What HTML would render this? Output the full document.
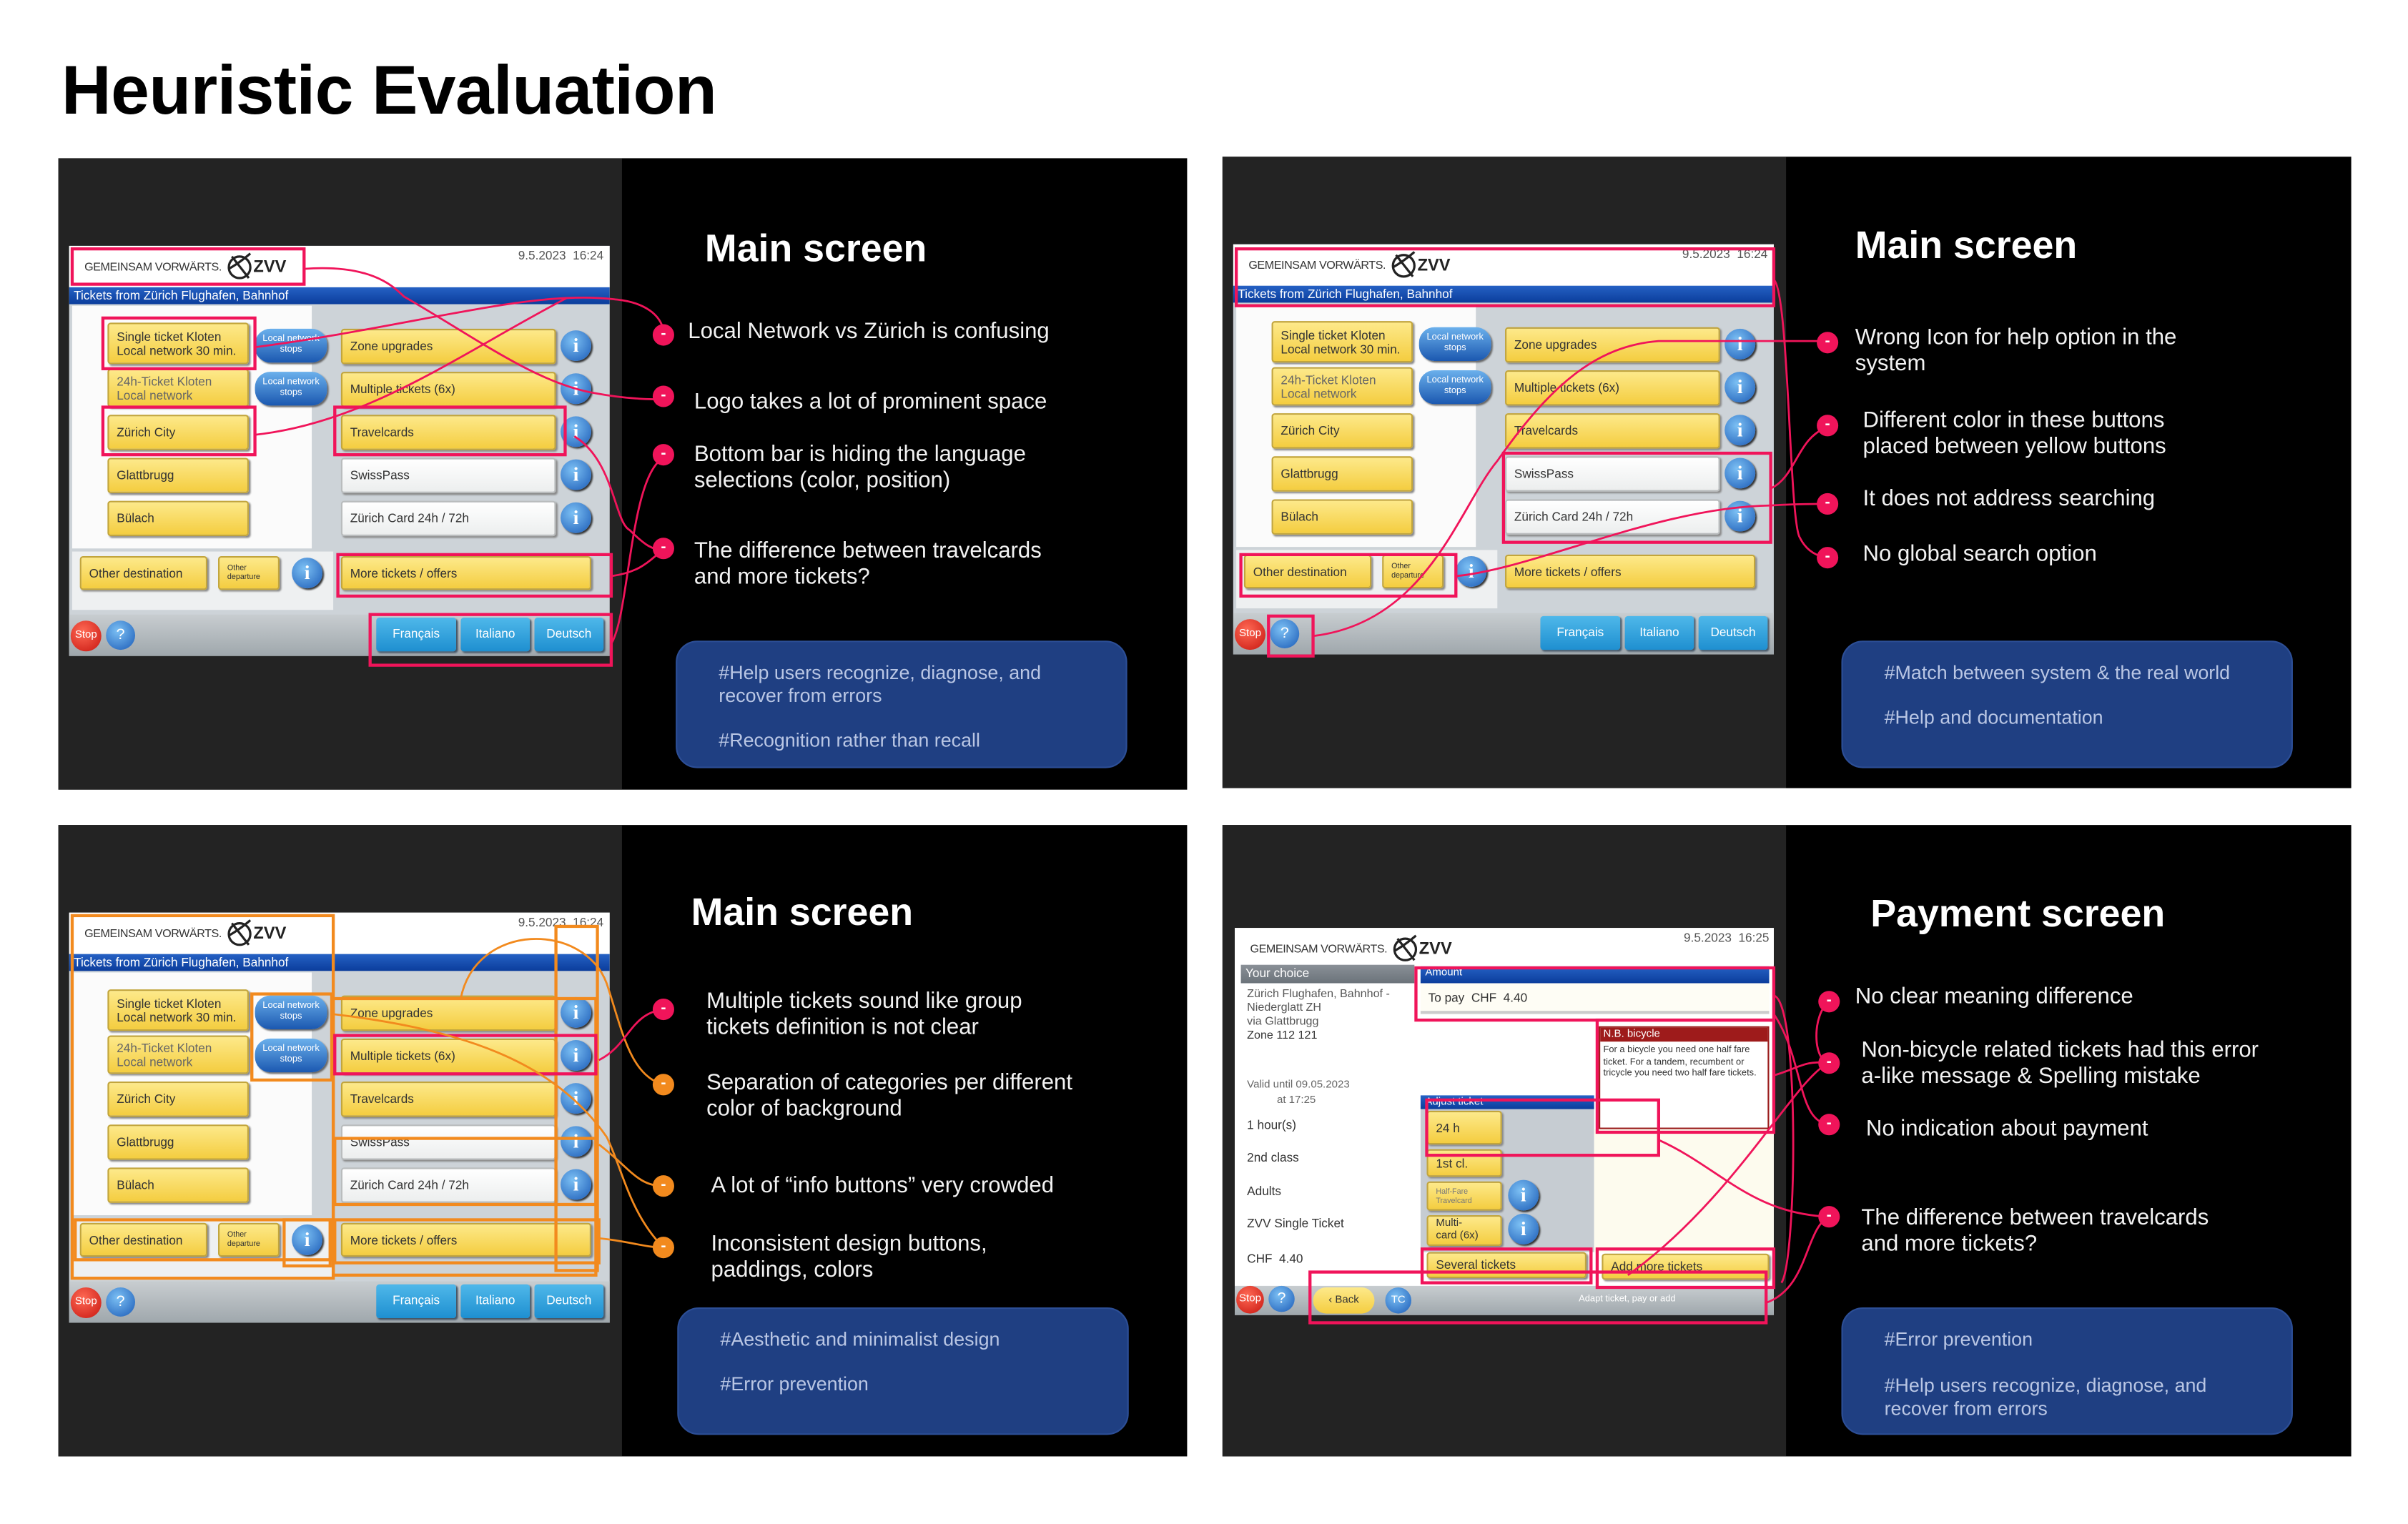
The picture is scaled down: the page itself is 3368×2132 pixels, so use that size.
<!DOCTYPE html>
<html><head><meta charset="utf-8"><style>
html,body{margin:0;padding:0;background:#fff;width:3368px;height:2132px;overflow:hidden}
#w{position:absolute;left:0;top:0;width:1568px;height:992px;transform:scale(2.148,2.1492);transform-origin:0 0;font-family:"Liberation Sans",sans-serif}
.ab{position:absolute}
h1{position:absolute;left:40px;top:36px;margin:0;font-size:45px;line-height:45px;font-weight:bold;color:#000;letter-spacing:-0.3px}
.pan{position:absolute;width:735px;height:411px;background:#000;overflow:hidden}
.pan .lf{position:absolute;left:0;top:0;width:367px;height:411px;background:#232323}
.pt{position:absolute;color:#fff;font-weight:bold;font-size:25px;line-height:28px;white-space:nowrap}
.tx{position:absolute;color:#f2f2f2;font-size:14.5px;line-height:17px;white-space:nowrap}
.bx{position:absolute;width:294px;height:83px;background:#1f3f82;border-radius:14px;border:1px solid #2c4e96;box-sizing:border-box}
.bx div{position:absolute;left:27px;color:#b9c6e4;font-size:12.5px;line-height:15px;white-space:nowrap}
/* kiosk */
.scr{position:absolute;width:352px;height:267px;background:#cdd3d8;overflow:hidden;font-family:"Liberation Sans Narrow","Liberation Sans",sans-serif;font-size:8px;color:#333}
.scr .hd{position:absolute;left:0;top:0;width:352px;height:27px;background:#fff}
.gv{position:absolute;left:10px;top:9px;font-size:7.5px;color:#333;letter-spacing:-0.2px}
.zl{position:absolute;left:102px;top:3px;font-size:11px;color:#222;font-weight:bold}
.zl span{position:absolute;left:18px;top:5px}
.dt{position:absolute;right:4px;top:2px;font-size:8px;color:#555}
.bb{position:absolute;left:0;top:27px;width:352px;height:11px;background:linear-gradient(#2561c4,#0b3d9c);color:#fff;font-size:8px;line-height:11px;padding-left:3px;box-sizing:border-box}
.lp{position:absolute;left:2px;top:39px;width:156px;height:158px;background:#fbfbfb}
.lb{position:absolute;left:2px;top:199px;width:170px;height:38px;background:#eef0f1}
.y{position:absolute;background:linear-gradient(#fde98a,#f4cd40);border:1px solid #c2a53c;border-radius:2px;box-shadow:1px 1px 1px #8a8a8a;box-sizing:border-box;padding-left:5px;display:flex;align-items:center;font-size:8px;line-height:9px;color:#333}
.wh{background:linear-gradient(#fff,#eceeee);border-color:#b9bcbd}
.pl{position:absolute;width:47px;height:22px;border-radius:10px;background:linear-gradient(#6bb0ec,#1b58b0);color:#fff;font-size:6px;line-height:7px;text-align:center;box-sizing:border-box;padding-top:4px;box-shadow:1px 1px 1px #666}
.i{position:absolute;width:20px;height:20px;border-radius:50%;background:radial-gradient(circle at 40% 35%,#7cc0f4,#1a5ab6);color:#fff;font:bold 13px/20px "Liberation Serif",serif;text-align:center;box-shadow:1px 1px 1px #333}
.bar{position:absolute;left:0;top:240px;width:352px;height:27px;background:linear-gradient(#c8cdd0,#9fa7ac)}
.st{position:absolute;width:20px;height:20px;border-radius:50%;background:radial-gradient(circle at 40% 35%,#ff6a55,#c7150f);color:#fff;font-size:7px;line-height:20px;text-align:center}
.q{position:absolute;width:19px;height:19px;border-radius:50%;background:radial-gradient(circle at 40% 35%,#7cc0f4,#1a5ab6);color:#fff;font-size:10px;line-height:19px;text-align:center}
.lg{position:absolute;top:242px;height:22px;background:linear-gradient(#4fb8ea,#1e8fd0);color:#fff;font-size:8px;line-height:22px;text-align:center;border-radius:2px;box-shadow:1px 1px 1px #456}
svg.ov{position:absolute;left:0;top:0;width:1568px;height:992px;overflow:visible}
.dot{position:absolute;width:14px;height:14px;border-radius:50%;background:#f0145a;color:#fff;font-size:10px;line-height:13px;text-align:center;font-weight:bold}
.or{background:#f28a1e}
</style></head><body><div id="w">
<h1>Heuristic Evaluation</h1>

<!-- PANEL 1 -->
<div class="pan" style="left:38px;top:103px"><div class="lf"></div>
<div class="pt" style="left:421px;top:45px">Main screen</div>
<div class="tx" style="left:410px;top:105px">Local Network vs Zürich is confusing</div>
<div class="tx" style="left:414px;top:151px">Logo takes a lot of prominent space</div>
<div class="tx" style="left:414px;top:185px">Bottom bar is hiding the language<br>selections (color, position)</div>
<div class="tx" style="left:414px;top:248px">The difference between travelcards<br>and more tickets?</div>
<div class="bx" style="left:402px;top:314px"><div style="top:13px">#Help users recognize, diagnose, and<br>recover from errors</div><div style="top:57px">#Recognition rather than recall</div></div>
</div>

<!-- PANEL 2 -->
<div class="pan" style="left:796px;top:102px"><div class="lf"></div>
<div class="pt" style="left:412px;top:44px">Main screen</div>
<div class="tx" style="left:412px;top:110px">Wrong Icon for help option in the<br>system</div>
<div class="tx" style="left:417px;top:164px">Different color in these buttons<br>placed between yellow buttons</div>
<div class="tx" style="left:417px;top:215px">It does not address searching</div>
<div class="tx" style="left:417px;top:251px">No global search option</div>
<div class="bx" style="left:403px;top:315px"><div style="top:13px">#Match between system &amp; the real world</div><div style="top:42px">#Help and documentation</div></div>
</div>

<!-- PANEL 3 -->
<div class="pan" style="left:38px;top:537px"><div class="lf"></div>
<div class="pt" style="left:412px;top:43px">Main screen</div>
<div class="tx" style="left:422px;top:107px">Multiple tickets sound like group<br>tickets definition is not clear</div>
<div class="tx" style="left:422px;top:160px">Separation of categories per different<br>color of background</div>
<div class="tx" style="left:425px;top:227px">A lot of “info buttons” very crowded</div>
<div class="tx" style="left:425px;top:265px">Inconsistent design buttons,<br>paddings, colors</div>
<div class="bx" style="left:403px;top:314px"><div style="top:13px">#Aesthetic and minimalist design</div><div style="top:42px">#Error prevention</div></div>
</div>

<!-- PANEL 4 -->
<div class="pan" style="left:796px;top:537px"><div class="lf"></div>
<div class="pt" style="left:422px;top:44px">Payment screen</div>
<div class="tx" style="left:412px;top:104px">No clear meaning difference</div>
<div class="tx" style="left:416px;top:139px">Non-bicycle related tickets had this error<br>a-like message &amp; Spelling mistake</div>
<div class="tx" style="left:419px;top:190px">No indication about payment</div>
<div class="tx" style="left:416px;top:248px">The difference between travelcards<br>and more tickets?</div>
<div class="bx" style="left:403px;top:314px"><div style="top:13px">#Error prevention</div><div style="top:43px">#Help users recognize, diagnose, and<br>recover from errors</div></div>
</div>

<!-- SCREEN 1 -->
<div class="scr" style="left:45px;top:160px">
<div class="hd"><span class="gv">GEMEINSAM VORWÄRTS.</span><span class="zl"><svg width="20" height="22" viewBox="0 0 20 22"><circle cx="9" cy="11" r="7" fill="none" stroke="#222" stroke-width="1.5"/><path d="M4 4 L15 18 M2 12 Q9 8 16 2" stroke="#222" stroke-width="1.5" fill="none"/></svg><span>ZVV</span></span><span class="dt">9.5.2023&nbsp; 16:24</span></div>
<div class="bb">Tickets from Zürich Flughafen, Bahnhof</div>
<div class="lp"></div><div class="lb"></div>
<div class="y" style="left:25px;top:50px;width:92px;height:27px">Single ticket Kloten<br>Local network 30 min.</div>
<div class="y" style="left:25px;top:80px;width:92px;height:25px;color:#666">24h-Ticket Kloten<br>Local network</div>
<div class="y" style="left:25px;top:110px;width:92px;height:23px">Zürich City</div>
<div class="y" style="left:25px;top:138px;width:92px;height:23px">Glattbrugg</div>
<div class="y" style="left:25px;top:166px;width:92px;height:23px">Bülach</div>
<div class="pl" style="left:121px;top:54px">Local network<br>stops</div>
<div class="pl" style="left:121px;top:82px">Local network<br>stops</div>
<div class="y" style="left:177px;top:54px;width:140px;height:23px">Zone upgrades</div>
<div class="y" style="left:177px;top:82px;width:140px;height:23px">Multiple tickets (6x)</div>
<div class="y" style="left:177px;top:110px;width:140px;height:23px">Travelcards</div>
<div class="y wh" style="left:177px;top:138px;width:140px;height:23px">SwissPass</div>
<div class="y wh" style="left:177px;top:166px;width:140px;height:23px">Zürich Card 24h / 72h</div>
<div class="i" style="left:320px;top:55px">i</div><div class="i" style="left:320px;top:83px">i</div><div class="i" style="left:320px;top:111px">i</div><div class="i" style="left:320px;top:139px">i</div><div class="i" style="left:320px;top:167px">i</div>
<div class="y" style="left:7px;top:202px;width:83px;height:22px">Other destination</div>
<div class="y" style="left:97px;top:202px;width:40px;height:22px;font-size:5px;line-height:6px">Other<br>departure</div>
<div class="i" style="left:145px;top:203px">i</div>
<div class="y" style="left:177px;top:202px;width:163px;height:22px">More tickets / offers</div>
<div class="bar"></div><div class="st" style="left:1px;top:244px">Stop</div><div class="q" style="left:24px;top:244px">?</div>
<div class="lg" style="left:200px;width:52px">Français</div><div class="lg" style="left:255px;width:45px">Italiano</div><div class="lg" style="left:303px;width:45px">Deutsch</div>
</div>

<!-- SCREEN 2 -->
<div class="scr" style="left:803px;top:159px">
<div class="hd"><span class="gv">GEMEINSAM VORWÄRTS.</span><span class="zl"><svg width="20" height="22" viewBox="0 0 20 22"><circle cx="9" cy="11" r="7" fill="none" stroke="#222" stroke-width="1.5"/><path d="M4 4 L15 18 M2 12 Q9 8 16 2" stroke="#222" stroke-width="1.5" fill="none"/></svg><span>ZVV</span></span><span class="dt">9.5.2023&nbsp; 16:24</span></div>
<div class="bb">Tickets from Zürich Flughafen, Bahnhof</div>
<div class="lp"></div><div class="lb"></div>
<div class="y" style="left:25px;top:50px;width:92px;height:27px">Single ticket Kloten<br>Local network 30 min.</div>
<div class="y" style="left:25px;top:80px;width:92px;height:25px;color:#666">24h-Ticket Kloten<br>Local network</div>
<div class="y" style="left:25px;top:110px;width:92px;height:23px">Zürich City</div>
<div class="y" style="left:25px;top:138px;width:92px;height:23px">Glattbrugg</div>
<div class="y" style="left:25px;top:166px;width:92px;height:23px">Bülach</div>
<div class="pl" style="left:121px;top:54px">Local network<br>stops</div>
<div class="pl" style="left:121px;top:82px">Local network<br>stops</div>
<div class="y" style="left:177px;top:54px;width:140px;height:23px">Zone upgrades</div>
<div class="y" style="left:177px;top:82px;width:140px;height:23px">Multiple tickets (6x)</div>
<div class="y" style="left:177px;top:110px;width:140px;height:23px">Travelcards</div>
<div class="y wh" style="left:177px;top:138px;width:140px;height:23px">SwissPass</div>
<div class="y wh" style="left:177px;top:166px;width:140px;height:23px">Zürich Card 24h / 72h</div>
<div class="i" style="left:320px;top:55px">i</div><div class="i" style="left:320px;top:83px">i</div><div class="i" style="left:320px;top:111px">i</div><div class="i" style="left:320px;top:139px">i</div><div class="i" style="left:320px;top:167px">i</div>
<div class="y" style="left:7px;top:202px;width:83px;height:22px">Other destination</div>
<div class="y" style="left:97px;top:202px;width:40px;height:22px;font-size:5px;line-height:6px">Other<br>departure</div>
<div class="i" style="left:145px;top:203px">i</div>
<div class="y" style="left:177px;top:202px;width:163px;height:22px">More tickets / offers</div>
<div class="bar"></div><div class="st" style="left:1px;top:244px">Stop</div><div class="q" style="left:24px;top:244px">?</div>
<div class="lg" style="left:200px;width:52px">Français</div><div class="lg" style="left:255px;width:45px">Italiano</div><div class="lg" style="left:303px;width:45px">Deutsch</div>
</div>

<!-- SCREEN 3 -->
<div class="scr" style="left:45px;top:594px">
<div class="hd"><span class="gv">GEMEINSAM VORWÄRTS.</span><span class="zl"><svg width="20" height="22" viewBox="0 0 20 22"><circle cx="9" cy="11" r="7" fill="none" stroke="#222" stroke-width="1.5"/><path d="M4 4 L15 18 M2 12 Q9 8 16 2" stroke="#222" stroke-width="1.5" fill="none"/></svg><span>ZVV</span></span><span class="dt">9.5.2023&nbsp; 16:24</span></div>
<div class="bb">Tickets from Zürich Flughafen, Bahnhof</div>
<div class="lp"></div><div class="lb"></div>
<div class="y" style="left:25px;top:50px;width:92px;height:27px">Single ticket Kloten<br>Local network 30 min.</div>
<div class="y" style="left:25px;top:80px;width:92px;height:25px;color:#666">24h-Ticket Kloten<br>Local network</div>
<div class="y" style="left:25px;top:110px;width:92px;height:23px">Zürich City</div>
<div class="y" style="left:25px;top:138px;width:92px;height:23px">Glattbrugg</div>
<div class="y" style="left:25px;top:166px;width:92px;height:23px">Bülach</div>
<div class="pl" style="left:121px;top:54px">Local network<br>stops</div>
<div class="pl" style="left:121px;top:82px">Local network<br>stops</div>
<div class="y" style="left:177px;top:54px;width:140px;height:23px">Zone upgrades</div>
<div class="y" style="left:177px;top:82px;width:140px;height:23px">Multiple tickets (6x)</div>
<div class="y" style="left:177px;top:110px;width:140px;height:23px">Travelcards</div>
<div class="y wh" style="left:177px;top:138px;width:140px;height:23px">SwissPass</div>
<div class="y wh" style="left:177px;top:166px;width:140px;height:23px">Zürich Card 24h / 72h</div>
<div class="i" style="left:320px;top:55px">i</div><div class="i" style="left:320px;top:83px">i</div><div class="i" style="left:320px;top:111px">i</div><div class="i" style="left:320px;top:139px">i</div><div class="i" style="left:320px;top:167px">i</div>
<div class="y" style="left:7px;top:202px;width:83px;height:22px">Other destination</div>
<div class="y" style="left:97px;top:202px;width:40px;height:22px;font-size:5px;line-height:6px">Other<br>departure</div>
<div class="i" style="left:145px;top:203px">i</div>
<div class="y" style="left:177px;top:202px;width:163px;height:22px">More tickets / offers</div>
<div class="bar"></div><div class="st" style="left:1px;top:244px">Stop</div><div class="q" style="left:24px;top:244px">?</div>
<div class="lg" style="left:200px;width:52px">Français</div><div class="lg" style="left:255px;width:45px">Italiano</div><div class="lg" style="left:303px;width:45px">Deutsch</div>
</div>

<!-- SCREEN 4 payment -->
<div class="scr" style="left:804px;top:604px;width:351px;height:252px;background:#fff">
<div class="hd" style="height:24px"><span class="gv">GEMEINSAM VORWÄRTS.</span><span class="zl"><svg width="20" height="22" viewBox="0 0 20 22"><circle cx="9" cy="11" r="7" fill="none" stroke="#222" stroke-width="1.5"/><path d="M4 4 L15 18 M2 12 Q9 8 16 2" stroke="#222" stroke-width="1.5" fill="none"/></svg><span>ZVV</span></span><span class="dt">9.5.2023&nbsp; 16:25</span></div>
<div class="ab" style="left:4px;top:24px;width:113px;height:12px;background:linear-gradient(#8a9097,#6b737a);color:#fff;font-size:8px;line-height:12px;padding-left:3px;box-sizing:border-box">Your choice</div>
<div class="ab" style="left:8px;top:38px;font-size:7.5px;line-height:9px;color:#555">Zürich Flughafen, Bahnhof -<br>Niederglatt ZH<br>via Glattbrugg<br><span style="color:#333">Zone 112 121</span></div>
<div class="ab" style="left:8px;top:98px;font-size:7px;line-height:10px;color:#666">Valid until 09.05.2023<br>&nbsp;&nbsp;&nbsp;&nbsp;&nbsp;&nbsp;&nbsp;&nbsp;&nbsp;&nbsp;at 17:25</div>
<div class="ab" style="left:8px;top:124px;font-size:8px">1 hour(s)</div>
<div class="ab" style="left:8px;top:145px;font-size:8px">2nd class</div>
<div class="ab" style="left:8px;top:167px;font-size:8px">Adults</div>
<div class="ab" style="left:8px;top:188px;font-size:8px">ZVV Single Ticket</div>
<div class="ab" style="left:8px;top:211px;font-size:8px">CHF&nbsp; 4.40</div>
<div class="ab" style="left:121px;top:25px;width:227px;height:11px;background:linear-gradient(#2561c4,#0b3d9c);color:#fff;font-size:7px;line-height:10px;padding-left:3px;box-sizing:border-box">Amount</div>
<div class="ab" style="left:121px;top:36px;width:227px;height:20px;background:#fefdf5;border-bottom:2px solid #ccc;font-size:8px;line-height:20px;padding-left:5px;box-sizing:border-box">To pay&nbsp; CHF&nbsp; 4.40</div>
<div class="ab" style="left:237px;top:64px;width:111px;height:67px;background:#fff;border:1px solid #9a1a1a;box-sizing:border-box"><div style="background:#9e1b1b;color:#fff;font-size:7px;line-height:9px;padding-left:2px">N.B. bicycle</div><div style="font-size:6px;line-height:7.5px;padding:3px 2px;color:#333">For a bicycle you need one half fare ticket. For a tandem, recumbent or tricycle you need two half fare tickets.</div></div>
<div class="ab" style="left:121px;top:109px;width:113px;height:9px;background:linear-gradient(#2561c4,#0b3d9c);color:#fff;font-size:7px;line-height:9px;padding-left:3px;box-sizing:border-box">Adjust ticket</div>
<div class="ab" style="left:121px;top:118px;width:113px;height:93px;background:#c6ccd2"></div>
<div class="ab" style="left:234px;top:131px;width:117px;height:80px;background:#fdfbee"></div>
<div class="y" style="left:125px;top:119px;width:49px;height:22px">24 h</div>
<div class="y" style="left:125px;top:144px;width:49px;height:18px">1st cl.</div>
<div class="y" style="left:125px;top:165px;width:49px;height:19px;font-size:5px;line-height:6px;color:#777">Half-Fare<br>Travelcard</div>
<div class="y" style="left:125px;top:187px;width:49px;height:20px;font-size:7px;line-height:8px">Multi-<br>card (6x)</div>
<div class="i" style="left:178px;top:164px">i</div><div class="i" style="left:178px;top:186px">i</div>
<div class="y" style="left:125px;top:211px;width:104px;height:17px">Several tickets</div>
<div class="y" style="left:239px;top:212px;width:109px;height:17px">Add more tickets</div>
<div class="ab" style="left:0;top:233px;width:351px;height:19px;background:linear-gradient(#c8cdd0,#9fa7ac)"></div>
<div class="st" style="left:1px;top:233px;width:18px;height:18px;line-height:18px">Stop</div><div class="q" style="left:22px;top:233px;width:17px;height:17px;line-height:17px">?</div>
<div class="ab" style="left:51px;top:234px;width:40px;height:17px;border-radius:9px;background:linear-gradient(#fde98a,#f4cd40);font-size:7px;line-height:17px;text-align:center">&lsaquo; Back</div>
<div class="q" style="left:98px;top:234px;width:17px;height:17px;line-height:17px;font-size:7px">TC</div>
<div class="ab" style="left:224px;top:239px;font-size:6px;color:#fff">Adapt ticket, pay or add</div>
</div>

<svg class="ov" viewBox="0 0 1568 992" fill="none">
<g stroke="#f0145a" stroke-width="2">
<!-- P1 boxes -->
<rect x="47" y="162" width="151" height="23"/><rect x="67" y="207" width="99" height="33"/><rect x="67" y="265" width="99" height="31"/><rect x="218" y="265" width="150" height="31"/><rect x="220" y="361" width="178" height="27"/><rect x="241" y="400" width="157" height="33"/>
</g>
<g stroke="#f0145a" stroke-width="1.3">
<path d="M198,175 C240,172 255,185 263,193 C310,220 350,250 388,256 C410,260 425,260 436,260"/>
<path d="M166,226 C250,215 320,196 369,194 C390,193 400,195 402,195 C420,197 430,205 432,215"/>
<path d="M166,283 C240,275 300,230 369,194"/>
<path d="M374,284 C400,300 400,340 410,345 C420,355 425,358 432,358"/>
<path d="M398,375 C420,372 425,362 432,358"/>
<path d="M398,419 C410,400 410,310 432,298"/>
</g>
<!-- P2 -->
<g stroke="#f0145a" stroke-width="2">
<rect x="805" y="162" width="350" height="37"/><rect x="979" y="295" width="174" height="58"/><rect x="808" y="361" width="140" height="27"/><rect x="826" y="401" width="29" height="26"/>
</g>
<g stroke="#f0145a" stroke-width="1.3">
<path d="M1155,182 C1165,190 1165,340 1172,350 C1176,358 1182,362 1190,363"/>
<path d="M855,414 C930,405 950,330 975,300 C1010,250 1040,225 1080,222 L1190,222"/>
<path d="M1153,318 C1170,310 1170,285 1190,278"/>
<path d="M1153,329 C1170,328 1180,328 1190,328"/>
<path d="M948,375 C1000,370 1080,330 1153,329"/>
</g>
<!-- P3 -->
<g stroke="#f28a1e" stroke-width="2">
<rect x="47" y="596" width="170" height="236"/><rect x="49" y="794" width="166" height="26"/><rect x="164" y="647" width="52" height="56"/><rect x="217" y="650" width="171" height="180"/><rect x="362" y="603" width="27" height="224"/><rect x="218" y="741" width="170" height="43"/><rect x="218" y="794" width="172" height="28"/><rect x="185" y="794" width="30" height="30"/>
</g>
<rect x="218" y="674" width="170" height="25" stroke="#f0145a" stroke-width="2"/>
<g stroke="#f28a1e" stroke-width="1.3">
<path d="M300,650 C310,600 380,600 395,640 C405,670 410,700 432,706"/>
<path d="M216,660 C300,670 360,690 395,740 C405,760 410,790 432,812"/>
<path d="M390,745 C410,760 415,772 432,772"/>
<path d="M390,806 C410,808 420,812 432,812"/>
</g>
<path d="M390,690 C410,680 410,660 432,657" stroke="#f0145a" stroke-width="1.3"/>
<!-- P4 -->
<g stroke="#f0145a" stroke-width="2">
<rect x="922" y="630" width="233" height="34"/><rect x="1040" y="664" width="115" height="73"/><rect x="929" y="716" width="151" height="36"/><rect x="926" y="813" width="110" height="22"/><rect x="1040" y="813" width="115" height="25"/><rect x="853" y="828" width="297" height="33"/>
</g>
<g stroke="#f0145a" stroke-width="1.3">
<path d="M1155,648 C1172,652 1170,820 1160,835"/>
<path d="M1155,700 C1172,695 1175,690 1191,692"/>
<path d="M1155,660 C1175,690 1170,730 1191,732"/>
<path d="M1080,742 C1120,760 1140,790 1191,792"/>
<path d="M1150,848 C1178,838 1175,800 1191,792"/>
<path d="M1060,830 C1130,780 1170,700 1191,692"/>
<path d="M1191,652 C1180,660 1180,690 1191,692"/>
</g>
</svg>

<div class="dot" style="left:425px;top:211px">-</div><div class="dot" style="left:425px;top:251px">-</div><div class="dot" style="left:425px;top:289px">-</div><div class="dot" style="left:425px;top:350px">-</div>
<div class="dot" style="left:1183px;top:216px">-</div><div class="dot" style="left:1183px;top:270px">-</div><div class="dot" style="left:1183px;top:321px">-</div><div class="dot" style="left:1183px;top:356px">-</div>
<div class="dot" style="left:425px;top:650px">-</div><div class="dot or" style="left:425px;top:699px">-</div><div class="dot or" style="left:425px;top:765px">-</div><div class="dot or" style="left:425px;top:805px">-</div>
<div class="dot" style="left:1184px;top:645px">-</div><div class="dot" style="left:1184px;top:685px">-</div><div class="dot" style="left:1184px;top:725px">-</div><div class="dot" style="left:1184px;top:785px">-</div>
</div></body></html>
